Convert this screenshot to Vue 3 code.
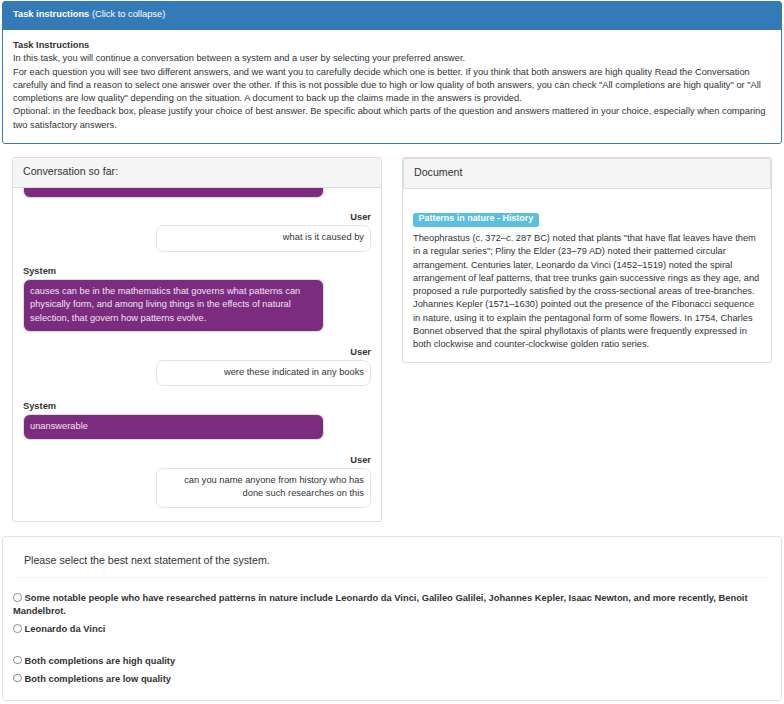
<script setup>
const messages = [
  { who: 'User', text: 'what is it caused by' },
  { who: 'System', text: 'causes can be in the mathematics that governs what patterns can physically form, and among living things in the effects of natural selection, that govern how patterns evolve.' },
  { who: 'User', text: 'were these indicated in any books' },
  { who: 'System', text: 'unanswerable' },
  { who: 'User', text: 'can you name anyone from history who has done such researches on this' },
]
const answers = [
  'Some notable people who have researched patterns in nature include Leonardo da Vinci, Galileo Galilei, Johannes Kepler, Isaac Newton, and more recently, Benoit Mandelbrot.',
  'Leonardo da Vinci',
]
const quality = ['Both completions are high quality', 'Both completions are low quality']
</script>

<template>
  <div class="page">
    <section class="task">
      <header class="task-head"><b>Task instructions</b> (Click to collapse)</header>
      <div class="task-body">
        <b>Task Instructions</b><br>
        In this task, you will continue a conversation between a system and a user by selecting your preferred answer.<br>
        For each question you will see two different answers, and we want you to carefully decide which one is better. If you think that both answers are high quality Read the Conversation carefully and find a reason to select one answer over the other. If this is not possible due to high or low quality of both answers, you can check "All completions are high quality" or "All completions are low quality" depending on the situation. A document to back up the claims made in the answers is provided.<br>
        Optional: in the feedback box, please justify your choice of best answer. Be specific about which parts of the question and answers mattered in your choice, especially when comparing two satisfactory answers.
      </div>
    </section>

    <div class="columns">
      <section class="panel convo">
        <header class="panel-head">Conversation so far:</header>
        <div class="convo-body">
          <div class="bubble system clipped"></div>
          <div v-for="(m, i) in messages" :key="i" class="msg" :class="m.who.toLowerCase()">
            <div class="who">{{ m.who }}</div>
            <div class="bubble" :class="m.who.toLowerCase()">{{ m.text }}</div>
          </div>
        </div>
      </section>

      <section class="panel doc">
        <header class="panel-head doc-head">Document</header>
        <div class="doc-body">
          <span class="label">Patterns in nature - History</span>
          <p>Theophrastus (c. 372–c. 287 BC) noted that plants "that have flat leaves have them in a regular series"; Pliny the Elder (23–79 AD) noted their patterned circular arrangement. Centuries later, Leonardo da Vinci (1452–1519) noted the spiral arrangement of leaf patterns, that tree trunks gain successive rings as they age, and proposed a rule purportedly satisfied by the cross-sectional areas of tree-branches. Johannes Kepler (1571–1630) pointed out the presence of the Fibonacci sequence in nature, using it to explain the pentagonal form of some flowers. In 1754, Charles Bonnet observed that the spiral phyllotaxis of plants were frequently expressed in both clockwise and counter-clockwise golden ratio series.</p>
        </div>
      </section>
    </div>

    <section class="select">
      <h3>Please select the best next statement of the system.</h3>
      <div class="options">
        <label v-for="a in answers" :key="a" class="opt"><input type="radio" name="best"> {{ a }}</label>
      </div>
      <div class="options quality">
        <label v-for="q in quality" :key="q" class="opt"><input type="radio" name="best"> {{ q }}</label>
      </div>
    </section>
  </div>
</template>

<style>
html, body { margin: 0; background: #fff; }
</style>

<style scoped>
.page {
  box-sizing: border-box;
  width: 784px;
  height: 704px;
  overflow: hidden;
  padding: 1px 2px 0;
  font-family: "Liberation Sans", Arial, sans-serif;
  font-size: 9.31px;
  line-height: 13.3px;
  color: #333;
}
.task {
  border: 1px solid #337ab7;
  border-radius: 3px;
  height: 143px;
  box-sizing: border-box;
  margin-bottom: 13px;
}
.task-head {
  background: #337ab7;
  color: #fff;
  height: 28px;
  box-sizing: border-box;
  padding: 6px 10px;
}
.task-body { padding: 9px 10px; }
.columns {
  display: flex;
  align-items: flex-start;
  gap: 20px;
  padding: 0 10px;
  margin-bottom: 14px;
}
.panel {
  width: 370px;
  box-sizing: border-box;
  border: 1px solid #ddd;
  border-radius: 3px;
  background: #fff;
}
.panel-head {
  background: #f5f5f5;
  border-bottom: 1px solid #ddd;
  font-size: 10.64px;
  padding: 0 10px;
  height: 30px;
  line-height: 26px;
  box-sizing: border-box;
}
.convo { height: 365px; }
.convo-body {
  height: 333px;
  overflow: hidden;
  display: flex;
  flex-direction: column;
  justify-content: flex-end;
  padding: 0 10px 13.5px;
  box-sizing: border-box;
}
.msg { flex: none; margin-top: 13.3px; }
.who { font-weight: bold; margin-bottom: 0.8px; }
.msg.user .who { text-align: right; }
.bubble {
  box-sizing: border-box;
  border: 1px solid #e3e3e3;
  border-radius: 7px;
  padding: 5px 6px 6.3px;
  min-height: 26.6px;
}
.bubble.user {
  width: 215px;
  margin-left: auto;
  text-align: right;
  background: #fff;
  border-color: #e5e5e5;
}
.bubble.system {
  width: 301px;
  background: #7b2c7f;
  color: #f1e2f2;
  border-color: #ddd;
}
.clipped { flex: none; height: 20px; }
.doc-head {
  height: 31px;
  line-height: 27px;
  border: 1px solid #ddd;
  border-radius: 3px 3px 0 0;
}
.doc-body { padding: 24px 10px 10px; }
.label {
  display: block;
  width: fit-content;
  background: #5bc0de;
  color: #fff;
  font-weight: bold;
  font-size: 8.95px;
  border-radius: 3px;
  padding: 0 5.5px 3px;
  height: 14px;
  line-height: 10px;
  box-sizing: border-box;
}
.doc-body p { margin: 5px 0 0; }
.select {
  box-sizing: border-box;
  height: 165px;
  border: 1px solid #e3e3e3;
  border-radius: 3px;
  padding: 0 10px;
  font-weight: bold;
}
.select h3 {
  margin: 0 0 14px;
  height: 41px;
  box-sizing: border-box;
  padding: 17px 11px 0;
  font-size: 10.64px;
  font-weight: normal;
  border-bottom: 1px solid #f6f6f6;
}
.options { display: flex; flex-direction: column; gap: 4.7px; }
.quality { margin-top: 18px; }
.opt { display: block; font-size: 9.35px; }
.opt input {
  appearance: none;
  box-sizing: border-box;
  width: 8.5px;
  height: 8.5px;
  margin: 0 0.5px 0 0;
  border: 1px solid #8c8c8c;
  border-radius: 50%;
  background: #fff;
  vertical-align: -0.5px;
}
</style>
